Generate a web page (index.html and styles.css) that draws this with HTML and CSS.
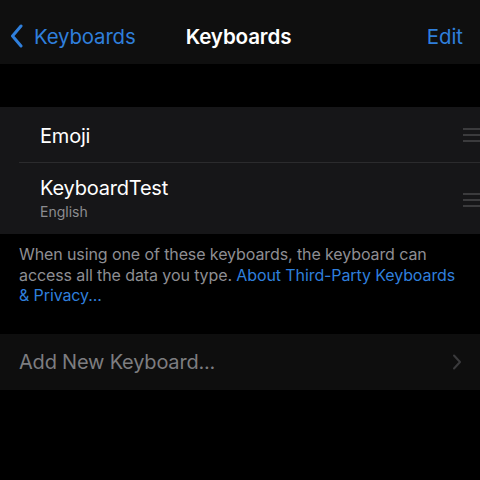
FILE: index.html
```html
<!DOCTYPE html>
<html>
<head>
<meta charset="utf-8">
<link rel="stylesheet" href="styles.css">
</head>
<body>
<div class="screen">
  <header class="nav">
    <div class="nav-back">
      <svg class="back-chevron" width="14" height="24" viewBox="0 0 14 24"><path d="M11 2 L2.5 12 L11 22" fill="none" stroke="#2f7fdc" stroke-width="3" stroke-linecap="round" stroke-linejoin="round"/></svg>
      <span>Keyboards</span>
    </div>
    <div class="nav-title">Keyboards</div>
    <div class="nav-edit">Edit</div>
  </header>

  <section class="group">
    <div class="row row-single">
      <div class="row-text"><div class="row-title">Emoji</div></div>
      <div class="handle"><i></i><i></i><i></i></div>
    </div>
    <div class="row row-double">
      <div class="row-text">
        <div class="row-title">KeyboardTest</div>
        <div class="row-sub">English</div>
      </div>
      <div class="handle"><i></i><i></i><i></i></div>
    </div>
  </section>

  <p class="footer">When using one of these keyboards, the keyboard can access all the data you type. <span class="link">About Third-Party Keyboards &amp; Privacy...</span></p>

  <section class="add-row">
    <span class="add-text">Add New Keyboard...</span>
    <svg class="chev" width="10" height="16" viewBox="0 0 10 16"><path d="M2 1.5 L8 8 L2 14.5" fill="none" stroke="#3a3a3c" stroke-width="2" stroke-linecap="round" stroke-linejoin="round"/></svg>
  </section>
</div>
</body>
</html>
```
FILE: styles.css
```css
* { box-sizing: border-box; }
html, body { margin: 0; padding: 0; background: #000; }
body { font-family: Inter, "Noto Sans", sans-serif; color: #fff; }
.screen { width: 480px; height: 480px; background: #000; overflow: hidden; }

.nav {
  height: 64px;
  background: #0f0f0f;
  display: grid;
  grid-template-columns: 1fr auto 1fr;
  align-items: center;
  padding: 8px 17px 0 10px;
}
.nav-back { display: flex; align-items: center; gap: 10px; color: #2f7fdc; font-size: 20.4px; letter-spacing: -0.15px; }
.back-chevron { display: block; }
.nav-title { font-size: 20.6px; font-weight: 600; color: #fff; letter-spacing: -0.15px; padding-left: 4px; }
.nav-edit { justify-self: end; color: #2f7fdc; font-size: 20.4px; }

.group {
  margin-top: 43px;
  background: #161618;
}
.row { display: flex; align-items: center; padding-left: 40px; }
.row-single { height: 55px; padding-top: 2px; }
.row-double { height: 72px; border-top: 1px solid #2b2b2d; margin-left: 19px; padding-left: 21px; }
.row-text { flex: 1; }
.row-title { font-size: 20px; color: #fff; letter-spacing: -0.2px; }
.row-double .row-title { margin-top: -2px; }
.row-sub { font-size: 14px; color: #8c8c90; margin-top: 3px; }
.handle { width: 17px; display: flex; flex-direction: column; gap: 4px; align-self: center; }
.handle i { display: block; height: 2px; background: #3b3b3d; }
.row-single .handle { margin-top: -2px; }
.row-double .handle { margin-top: 2px; }

.footer {
  margin: 0;
  padding: 10px 20px 0 19px;
  height: 100px;
  font-size: 16px;
  line-height: 20.5px;
  color: #8e8e93;
  letter-spacing: -0.1px;
}
.link { color: #2f7fdc; }

.add-row {
  height: 56px;
  background: #0e0e0e;
  display: flex;
  align-items: center;
  justify-content: space-between;
  padding: 0 18px 0 19px;
}
.add-text { font-size: 20px; color: #7d7d80; letter-spacing: -0.2px; }
.chev { display: block; }
```
